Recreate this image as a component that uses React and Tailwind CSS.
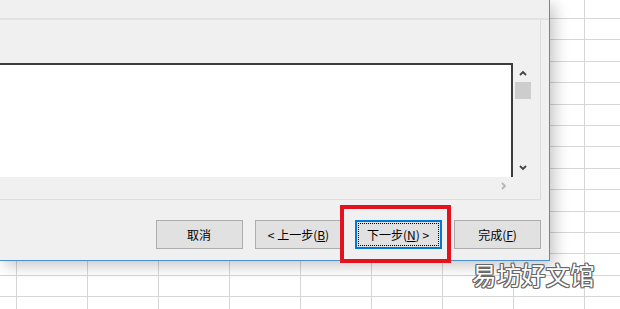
import React from "react";

const font = { fontFamily: '"Noto Sans CJK SC", "Noto Sans", sans-serif' };

function Chevron({ dir, className }) {
  const pts = {
    up: "1,5 4,2 7,5",
    down: "1,1 4,4 7,1",
    right: "1,1 4,4 1,7",
  }[dir];
  const box = dir === "right" ? "0 0 6 8" : "0 0 8 6";
  return (
    <svg viewBox={box} className={className} fill="none">
      <polyline points={pts} stroke="currentColor" strokeWidth="1.8" />
    </svg>
  );
}

function Button({ children, focused }) {
  if (focused) {
    return (
      <div className="w-[87px] h-[29px] border-2 border-[#0078d7] bg-[#e1e1e1] p-px">
        <div className="h-full w-full border border-dotted border-black flex items-center justify-center text-[12px] text-black">
          {children}
        </div>
      </div>
    );
  }
  return (
    <div className="w-[87px] h-[29px] border border-[#adadad] bg-[#e1e1e1] flex items-center justify-center text-[12px] text-black">
      {children}
    </div>
  );
}

export default function App() {
  const cells = Array.from({ length: 15 * 10 });

  return (
    <div className="relative w-[620px] h-[309px] overflow-hidden bg-white" style={font}>
      {/* SPREADSHEET GRID */}
      <div className="grid grid-cols-[16px_repeat(9,70px)] grid-rows-[18px_repeat(14,20.4px)] gap-px bg-[#d6d6d6] w-[700px]">
        {cells.map((_, i) => (
          <div key={i} className="bg-white" />
        ))}
      </div>

      {/* DIALOG */}
      <div className="absolute left-0 top-0 w-[550px] h-[261px] bg-[#f0f0f0] border-r border-b border-[#4b8fcf] shadow-[5px_5px_14px_rgba(0,0,0,0.22)] flex flex-col">
        <div className="h-[18px] shrink-0" />
        <div className="h-[2px] shrink-0 bg-[#e2e2e2]" />

        {/* PANEL */}
        <div className="mr-[8px] h-[180px] shrink-0 border-r border-b border-[#dcdcdc] flex flex-col pt-[43px]">
          <div className="flex h-[114px]">
            <div className="w-[513px] bg-white border-t-2 border-r-2 border-[#3c3c3c]" />
            <div className="w-[18px] flex flex-col items-center pt-[7px] pb-[6px] pl-[2px]">
              <Chevron dir="up" className="w-[8px] h-[6px] text-[#444]" />
              <div className="mt-[6px] w-[16px] h-[17px] bg-[#cdcdcd]" />
              <div className="flex-1" />
              <Chevron dir="down" className="w-[8px] h-[6px] text-[#444]" />
            </div>
          </div>
          <div className="flex w-[513px] justify-end pr-[6px] pt-[5px]">
            <Chevron dir="right" className="w-[6px] h-[8px] text-[#b5b5b5]" />
          </div>
        </div>

        {/* BUTTONS */}
        <div className="flex justify-end gap-[12.5px] pr-[8px] mt-[20px]">
          <Button>取消</Button>
          <Button>
            &lt; 上一步(<span className="underline">B</span>)
          </Button>
          <Button focused>
            下一步(<span className="underline">N</span>) &gt;
          </Button>
          <Button>
            完成(<span className="underline">F</span>)
          </Button>
        </div>
      </div>

      {/* RED HIGHLIGHT */}
      <div className="absolute left-[340px] top-[205px] w-[111px] h-[58px] border-[4px] border-[#e3121c]" />

      {/* WATERMARK */}
      <div className="absolute left-[472px] top-[263px] text-[24.5px] leading-none text-white [text-shadow:-1px_-1px_0_#666,1px_-1px_0_#666,-1px_1px_0_#666,1px_1px_0_#666,0_1px_0_#666,0_-1px_0_#666,1px_0_0_#666,-1px_0_0_#666]">
        易坊好文馆
      </div>
    </div>
  );
}
